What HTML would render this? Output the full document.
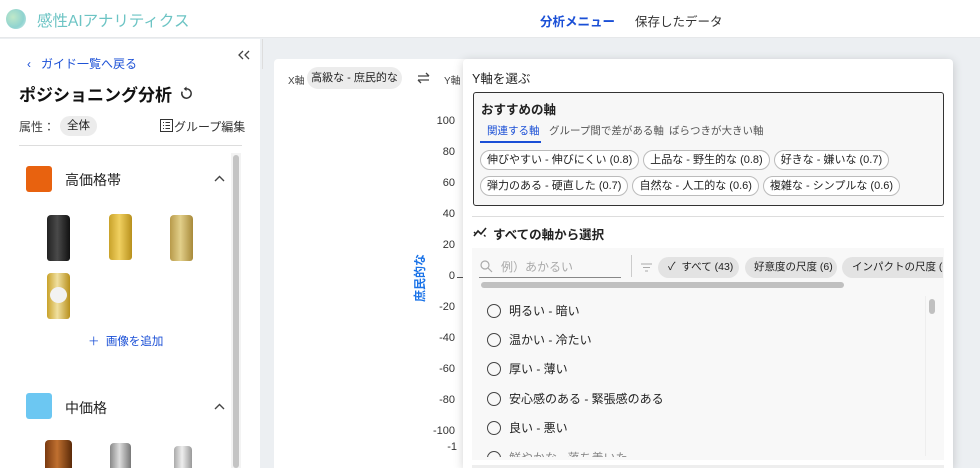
<!DOCTYPE html>
<html><head><meta charset="utf-8">
<style>
*{box-sizing:border-box;margin:0;padding:0}
html,body{width:980px;height:468px;overflow:hidden}
body{background:#eceff2;font-family:"Liberation Sans","Noto Sans CJK JP",sans-serif;color:#222}
#w{position:relative;width:980px;height:468px;overflow:hidden}
.abs{position:absolute}
.hdr{left:0;top:0;width:980px;height:38px;background:#fff;border-bottom:1px solid #e6e8ea}
.side{left:0;top:39px;width:260px;height:429px;background:#fff}
.can{position:absolute;width:23px;height:46px;border-radius:4px 4px 3px 3px}
.chip{display:inline-block;border:1px solid #bbb;border-radius:11px;padding:0 6px;height:20px;line-height:18px;font-size:11px;background:#fff;margin-right:4px;white-space:nowrap}
.gchip{position:absolute;top:257px;height:21px;line-height:21px;font-size:10.5px;background:#e3e3e3;border-radius:11px;padding:0 0 0 10px;white-space:nowrap;overflow:hidden}
.yl{position:absolute;right:0;font-size:11px;color:#333;text-align:right;width:40px}
.item{position:absolute;left:487px;font-size:12px;color:#222;height:16px;line-height:14px}
.item i{display:inline-block;width:14px;height:14px;border:1.5px solid #444;border-radius:50%;vertical-align:middle;margin-right:8px;margin-top:-2px}
</style></head><body><div id="w">
<div class="abs hdr">
  <div class="abs" style="left:6px;top:9px;width:20px;height:20px;border-radius:50%;background:radial-gradient(circle at 35% 40%,#bfe8c8,#8fd3d0 60%,#d8f0ee)"></div>
  <div class="abs" style="left:37px;top:9px;font-size:15.5px;color:#6cc4c4">感性AIアナリティクス</div>
  <div class="abs" style="left:540px;top:11px;font-size:12.5px;color:#1a4fd6;font-weight:bold">分析メニュー</div>
  <div class="abs" style="left:635px;top:11px;font-size:12.5px;color:#333">保存したデータ</div>
</div>
<div class="abs side"></div>
<svg class="abs" style="left:238px;top:50px" width="12" height="10" viewBox="0 0 12 10"><path d="M5 1L1 5l4 4M11 1L7 5l4 4" fill="none" stroke="#444" stroke-width="1.3"/></svg>
<div class="abs" style="left:262px;top:39px;width:1px;height:30px;background:#ddd"></div>
<div class="abs" style="left:27px;top:55px;font-size:12px;color:#1a4fd6">‹&nbsp;&nbsp;&nbsp;ガイド一覧へ戻る</div>
<div class="abs" style="left:19px;top:81px;font-size:17px;font-weight:bold;color:#111">ポジショニング分析</div>
<svg class="abs" style="left:179px;top:86px" width="15" height="15" viewBox="0 0 16 16"><path d="M8 3a5 5 0 1 1-4.6 3" fill="none" stroke="#333" stroke-width="1.6"/><path d="M8 0.5v5l-3-2.5z" fill="#333"/></svg>
<div class="abs" style="left:19px;top:118px;font-size:12px;color:#444">属性：</div>
<div class="abs" style="left:60px;top:116px;width:37px;height:20px;border-radius:10px;background:#ececec;font-size:11.5px;text-align:center;line-height:20px">全体</div>
<svg class="abs" style="left:160px;top:119px" width="13" height="13" viewBox="0 0 13 13"><rect x="0.5" y="0.5" width="12" height="12" fill="none" stroke="#333"/><path d="M3 3.5h1M3 6.5h1M3 9.5h1M5.5 3.5h4.5M5.5 6.5h4.5M5.5 9.5h4.5" stroke="#333"/></svg>
<div class="abs" style="left:174px;top:118px;font-size:12px;color:#333">グループ編集</div>
<div class="abs" style="left:19px;top:145px;width:223px;height:1px;background:#ddd"></div>
<div class="abs" style="left:231px;top:153px;width:10px;height:315px;background:#f3f3f3"></div>
<div class="abs" style="left:233px;top:155px;width:6px;height:313px;background:#c4c4c4;border-radius:3px"></div>
<div class="abs" style="left:26px;top:166px;width:26px;height:26px;border-radius:3px;background:#e8620f"></div>
<div class="abs" style="left:65px;top:170px;font-size:14px">高価格帯</div>
<svg class="abs" style="left:214px;top:175px" width="11" height="7" viewBox="0 0 11 7"><path d="M1 6l4.5-4.5L10 6" fill="none" stroke="#444" stroke-width="1.4"/></svg>
<div class="can" style="left:47px;top:215px;background:linear-gradient(90deg,#222,#4a4a4a 45%,#111)"></div>
<div class="can" style="left:109px;top:214px;background:linear-gradient(90deg,#c9a22a,#f0d060 45%,#b8901c)"></div>
<div class="can" style="left:170px;top:215px;background:linear-gradient(90deg,#b89a4a,#e2cf8a 45%,#a88a3a)"></div>
<div class="can" style="left:47px;top:273px;background:linear-gradient(90deg,#c9a22a,#f0e0a0 45%,#b8901c)"><div style="margin:14px 3px;height:16px;background:#f2f2f2;border-radius:50%"></div></div>
<div class="abs" style="left:88px;top:333px;font-size:11.5px;color:#1a4fd6">＋&nbsp; 画像を追加</div>
<div class="abs" style="left:26px;top:393px;width:26px;height:26px;border-radius:3px;background:#6cc7f2"></div>
<div class="abs" style="left:65px;top:398px;font-size:14px">中価格</div>
<svg class="abs" style="left:214px;top:403px" width="11" height="7" viewBox="0 0 11 7"><path d="M1 6l4.5-4.5L10 6" fill="none" stroke="#444" stroke-width="1.4"/></svg>
<div class="can" style="left:45px;top:440px;width:27px;height:28px;border-radius:4px 4px 0 0;background:linear-gradient(90deg,#7a3a10,#c07030 45%,#5a2a08)"></div>
<div class="can" style="left:110px;top:443px;width:21px;height:25px;border-radius:4px 4px 0 0;background:linear-gradient(90deg,#888,#ddd 45%,#777)"></div>
<div class="can" style="left:174px;top:446px;width:18px;height:22px;border-radius:4px 4px 0 0;background:linear-gradient(90deg,#aaa,#eee 45%,#999)"></div>

<div class="abs" style="left:274px;top:59px;width:200px;height:409px;background:#fff;border-radius:4px 4px 0 0"></div>
<div class="abs" style="left:288px;top:72px;font-size:10px;color:#444">X軸</div>
<div class="abs" style="left:307px;top:67px;width:95px;height:22px;border-radius:11px;background:#ececec;font-size:11px;line-height:22px;text-align:center">高級な - 庶民的な</div>
<svg class="abs" style="left:416px;top:72px" width="15" height="12" viewBox="0 0 15 12"><path d="M2 4h11M10 1l3 3M13 8H2M5 11L2 8" fill="none" stroke="#444" stroke-width="1.3"/></svg>
<div class="abs" style="left:444px;top:72px;font-size:10px;color:#444">Y軸</div>
<div class="abs" style="left:390px;top:271px;width:60px;height:14px;line-height:14px;text-align:center;font-size:12px;color:#1a73e8;font-weight:bold;transform:rotate(-90deg)">庶民的な</div>
<div class="abs" style="left:415px;top:115px;width:40px;height:345px">
<div class="yl" style="top:0">100</div><div class="yl" style="top:31px">80</div><div class="yl" style="top:62px">60</div><div class="yl" style="top:93px">40</div><div class="yl" style="top:124px">20</div><div class="yl" style="top:155px">0</div><div class="yl" style="top:186px">-20</div><div class="yl" style="top:217px">-40</div><div class="yl" style="top:248px">-60</div><div class="yl" style="top:279px">-80</div><div class="yl" style="top:310px">-100</div><div class="yl" style="top:326px;right:-2px">-1</div>
</div>
<div class="abs" style="left:457px;top:277px;width:6px;height:1px;background:#555"></div>

<div class="abs" style="left:463px;top:59px;width:490px;height:409px;background:#fff;border-radius:4px 4px 0 0;box-shadow:0 2px 10px rgba(0,0,0,.18)"></div>
<div class="abs" style="left:472px;top:68px;font-size:12.5px">Y軸を選ぶ</div>
<div class="abs" style="left:473px;top:92px;width:471px;height:114px;border:1px solid #333;border-radius:3px;background:#f7f7f7"></div>
<div class="abs" style="left:481px;top:99px;font-size:12.5px;font-weight:bold">おすすめの軸</div>
<div class="abs" style="left:487px;top:123px;font-size:10.5px;color:#1a4fd6">関連する軸</div>
<div class="abs" style="left:480px;top:141px;width:61px;height:2px;background:#1a4fd6"></div>
<div class="abs" style="left:549px;top:123px;font-size:10.5px;color:#555">グループ間で差がある軸</div>
<div class="abs" style="left:669px;top:123px;font-size:10.5px;color:#555">ばらつきが大きい軸</div>
<div class="abs" style="left:480px;top:150px;width:460px">
<span class="chip">伸びやすい - 伸びにくい (0.8)</span><span class="chip">上品な - 野生的な (0.8)</span><span class="chip">好きな - 嫌いな (0.7)</span>
</div>
<div class="abs" style="left:480px;top:176px;width:460px">
<span class="chip">弾力のある - 硬直した (0.7)</span><span class="chip">自然な - 人工的な (0.6)</span><span class="chip">複雑な - シンプルな (0.6)</span>
</div>
<div class="abs" style="left:472px;top:216px;width:472px;height:1px;background:#ddd"></div>
<svg class="abs" style="left:473px;top:226px" width="15" height="12" viewBox="0 0 15 12"><path d="M1 10l4-5 3 3 5-6" fill="none" stroke="#222" stroke-width="1.6"/><path d="M1 6l1.5 1.5M11 9l1.5 1.5" stroke="#222" stroke-width="1.4"/></svg>
<div class="abs" style="left:493px;top:224px;font-size:12.5px;font-weight:bold">すべての軸から選択</div>
<div class="abs" style="left:472px;top:248px;width:472px;height:212px;background:#f8f8f8"></div>
<svg class="abs" style="left:480px;top:260px" width="13" height="13" viewBox="0 0 13 13"><circle cx="5" cy="5" r="4" fill="none" stroke="#aaa" stroke-width="1.2"/><path d="M8 8l4 4" stroke="#aaa" stroke-width="1.2"/></svg>
<div class="abs" style="left:501px;top:258px;font-size:12px;color:#aaa">例）あかるい</div>
<div class="abs" style="left:479px;top:277px;width:142px;height:1px;background:#888"></div>
<div class="abs" style="left:631px;top:255px;width:1px;height:22px;background:#ccc"></div>
<svg class="abs" style="left:640px;top:263px" width="13" height="9" viewBox="0 0 13 9"><path d="M1 1h11M3 4.5h7M5 8h3" stroke="#aaa" stroke-width="1.1"/></svg>
<div class="gchip" style="left:658px;width:81px"><span style="font-size:11px">✓</span>&nbsp; すべて (43)</div>
<div class="gchip" style="left:745px;width:92px;padding-left:9px">好意度の尺度 (6)</div>
<div class="gchip" style="left:842px;width:101px;border-radius:11px 0 0 11px">インパクトの尺度 (6)</div>
<div class="abs" style="left:481px;top:282px;width:363px;height:6px;border-radius:3px;background:#c0c0c0"></div>
<div class="abs" style="left:925px;top:296px;width:1px;height:160px;background:#eee"></div>
<div class="abs" style="left:929px;top:299px;width:6px;height:15px;border-radius:3px;background:#c0c0c0"></div>
<div class="item" style="top:304px"><i></i>明るい - 暗い</div>
<div class="item" style="top:333px"><i></i>温かい - 冷たい</div>
<div class="item" style="top:362px"><i></i>厚い - 薄い</div>
<div class="item" style="top:392px"><i></i>安心感のある - 緊張感のある</div>
<div class="item" style="top:421px"><i></i>良い - 悪い</div>
<div class="item" style="top:451px;height:6px;overflow:hidden;color:#888"><i></i>鮮やかな - 落ち着いた</div>
<div class="abs" style="left:472px;top:465px;width:472px;height:3px;background:#eee"></div>
</div></body></html>
